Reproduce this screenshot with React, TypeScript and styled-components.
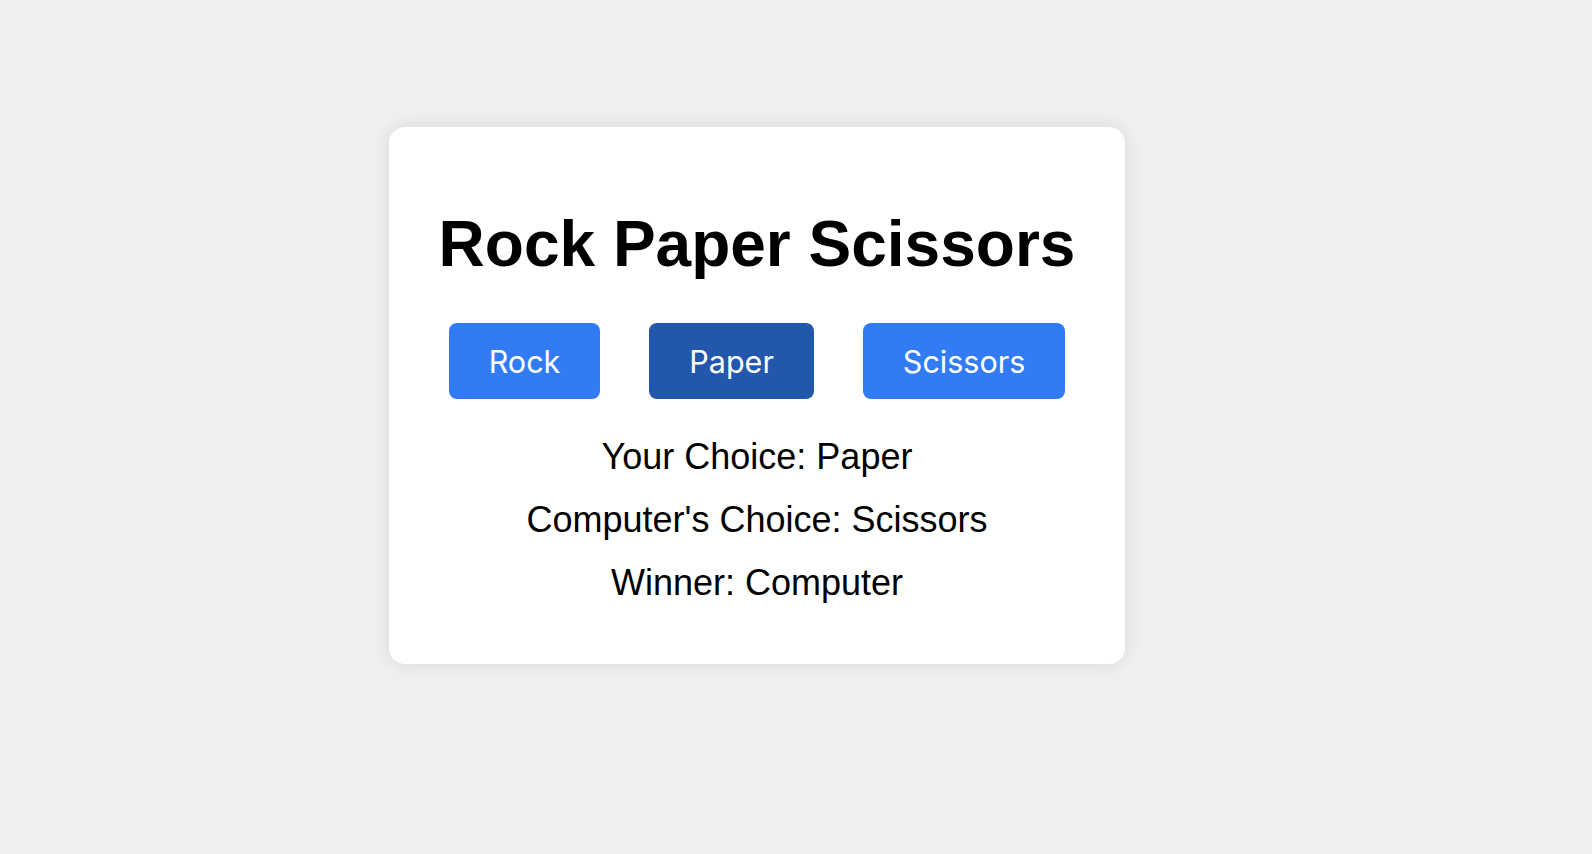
import React, { useState } from "react";
import styled, { createGlobalStyle } from "styled-components";

const GlobalStyle = createGlobalStyle`
  html, body {
    margin: 0;
    padding: 0;
    background: #f0f0f0;
  }
  body {
    font-family: "Liberation Sans", Arial, sans-serif;
  }
  * { box-sizing: border-box; }
`;

const Page = styled.div`
  min-height: 100vh;
  display: flex;
  justify-content: center;
  align-items: center;
  padding: 0 78px 63px 0;
`;

const Card = styled.div`
  width: 736px;
  height: 537px;
  background: #ffffff;
  border-radius: 16px;
  box-shadow: 0 0 20px rgba(0, 0, 0, 0.1);
  display: flex;
  flex-direction: column;
  align-items: center;
  padding-top: 81px;
`;

const Title = styled.h1`
  margin: 0;
  font-family: "Liberation Sans", Arial, sans-serif;
  font-weight: 700;
  font-size: 64px;
  line-height: 73px;
  color: #000;
`;

const ButtonRow = styled.div`
  display: flex;
  gap: 49px;
  margin-top: 42px;
`;

const ChoiceButton = styled.button<{ $active?: boolean }>`
  height: 76px;
  padding: 0 40px;
  border: none;
  border-radius: 8px;
  background: ${(p) => (p.$active ? "#2257ab" : "#317cf5")};
  color: #ffffff;
  font-family: Inter, "Noto Sans", sans-serif;
  font-size: 30.5px;
  font-weight: 400;
  cursor: pointer;
`;

const Results = styled.div`
  display: flex;
  flex-direction: column;
  align-items: center;
  gap: 22px;
  margin-top: 37px;
`;

const ResultLine = styled.p`
  margin: 0;
  font-family: "Liberation Sans", Arial, sans-serif;
  font-size: 36px;
  line-height: 41px;
  color: #000;
`;

const choices = ["Rock", "Paper", "Scissors"];

export default function App() {
  const [choice, setChoice] = useState("Paper");
  return (
    <>
      <GlobalStyle />
      <Page>
        <Card>
          <Title>Rock Paper Scissors</Title>
          <ButtonRow>
            {choices.map((c) => (
              <ChoiceButton key={c} $active={c === choice} onClick={() => setChoice(c)}>
                {c}
              </ChoiceButton>
            ))}
          </ButtonRow>
          <Results>
            <ResultLine>Your Choice: {choice}</ResultLine>
            <ResultLine>Computer's Choice: Scissors</ResultLine>
            <ResultLine>Winner: Computer</ResultLine>
          </Results>
        </Card>
      </Page>
    </>
  );
}
